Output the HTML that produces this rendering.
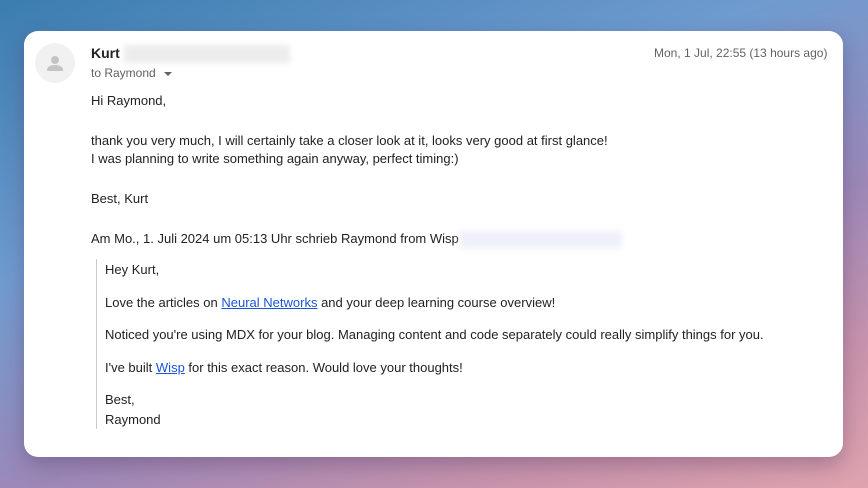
<!DOCTYPE html>
<html><head><style>
html,body{margin:0;padding:0;width:868px;height:488px;overflow:hidden}
body{background:linear-gradient(160deg,#3b7db0 0%,#6f9bcf 35%,#9c88b8 62%,#c793ac 82%,#dfa3ae 100%);font-family:"Liberation Sans",sans-serif;color:#222;position:relative}
.card{position:absolute;left:24px;top:31px;width:819px;height:426px;background:#fff;border-radius:14px;box-shadow:0 8px 20px rgba(80,50,90,.35)}
.t{position:absolute;font-size:13px;white-space:nowrap;line-height:16px}
.av{position:absolute;left:35px;top:43px;width:40px;height:40px;border-radius:50%;background:#f1f1f1}
.blur{position:absolute;background:#ececec;filter:blur(3px)}
a{color:#1a55d6;text-decoration:underline}
</style></head><body>
<div class="card"></div>
<div class="av"><svg width="40" height="40" viewBox="0 0 40 40"><circle cx="20" cy="17" r="4" fill="#c4c4c4"/><path d="M12 27c0-4 5-5 8-5s8 1 8 5v1H12z" fill="#c4c4c4"/></svg></div>
<div class="t" style="left:91px;top:45px;font-size:14px;font-weight:bold;color:#222">Kurt</div>
<div class="blur" style="left:124px;top:45px;width:166px;height:18px"></div>
<div class="t" style="left:91px;top:65px;font-size:12px;color:#5f6368">to Raymond <span style="display:inline-block;margin-left:5px;border-left:4px solid transparent;border-right:4px solid transparent;border-top:4px solid #5f6368;vertical-align:middle"></span></div>
<div class="t" style="left:654px;top:45px;font-size:12px;color:#5f6368">Mon, 1 Jul, 22:55 (13 hours ago)</div>
<div class="t" style="left:91px;top:93px">Hi Raymond,</div>
<div class="t" style="left:91px;top:133px">thank you very much, I will certainly take a closer look at it, looks very good at first glance!</div>
<div class="t" style="left:91px;top:151px">I was planning to write something again anyway, perfect timing:)</div>
<div class="t" style="left:91px;top:191px">Best, Kurt</div>
<div class="t" style="left:91px;top:231px">Am Mo., 1. Juli 2024 um 05:13 Uhr schrieb Raymond from Wisp</div>
<div class="blur" style="left:460px;top:231px;width:162px;height:17px;background:#eef0fa"></div>
<div style="position:absolute;left:96px;top:259px;width:1px;height:170px;background:#ccc"></div>
<div class="t" style="left:105px;top:262px">Hey Kurt,</div>
<div class="t" style="left:105px;top:295px">Love the articles on <a>Neural Networks</a> and your deep learning course overview!</div>
<div class="t" style="left:105px;top:327px">Noticed you're using MDX for your blog. Managing content and code separately could really simplify things for you.</div>
<div class="t" style="left:105px;top:360px">I've built <a>Wisp</a> for this exact reason. Would love your thoughts!</div>
<div class="t" style="left:105px;top:392px">Best,</div>
<div class="t" style="left:105px;top:412px">Raymond</div>
</body></html>
